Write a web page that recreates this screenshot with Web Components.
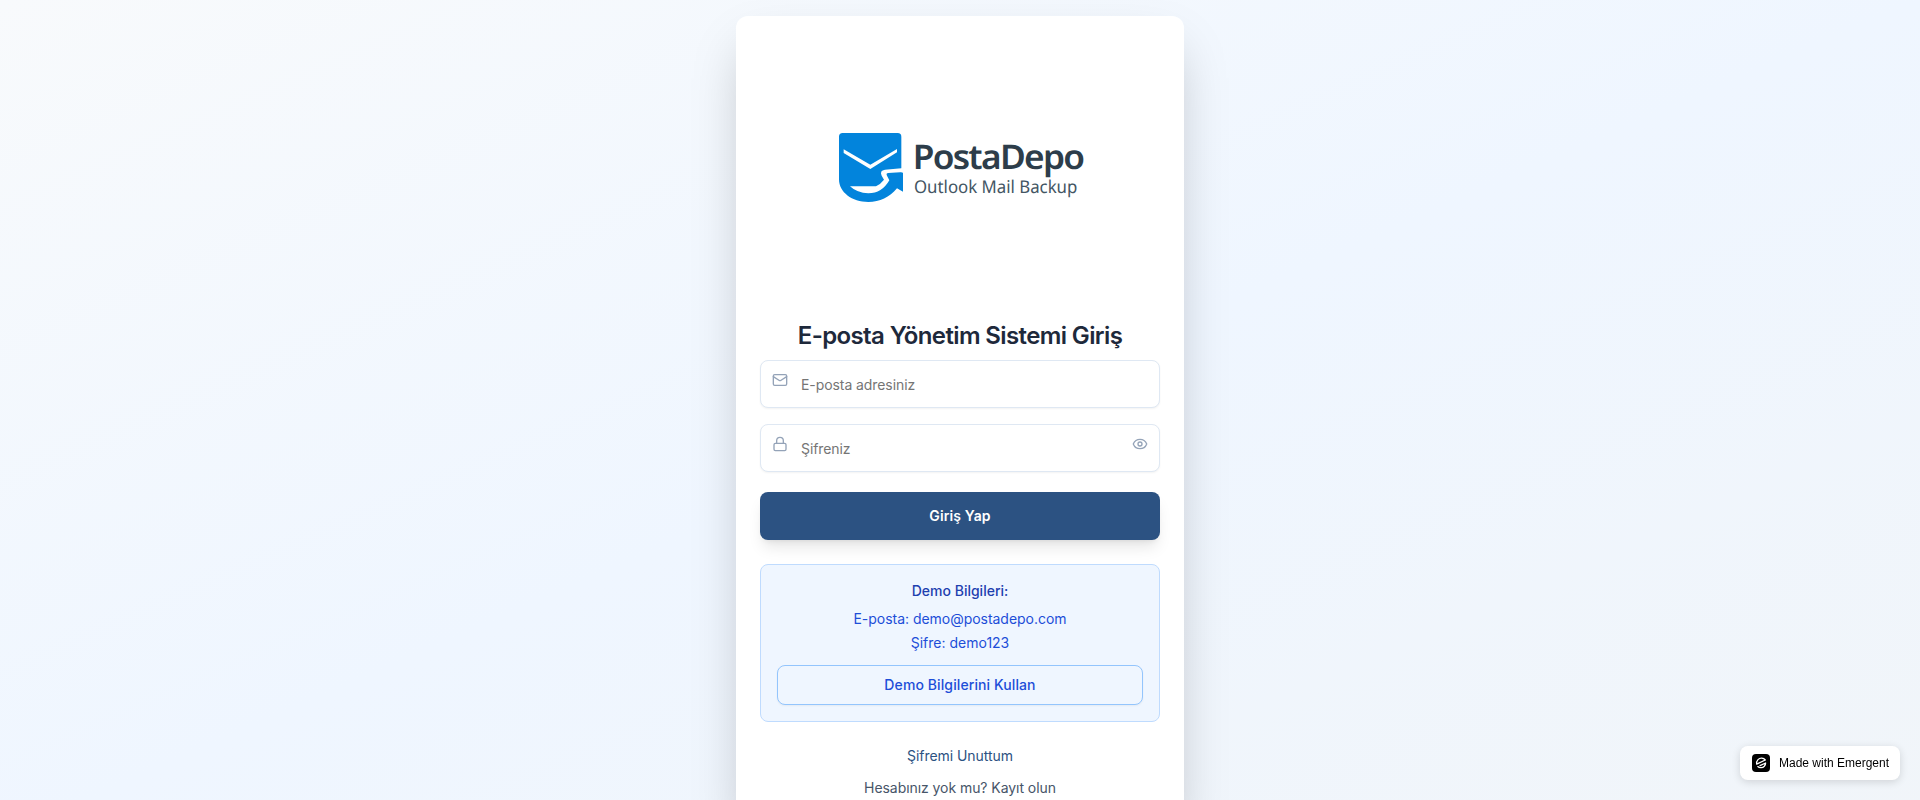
<!DOCTYPE html>
<html lang="tr">
<head>
<meta charset="utf-8">
<title>PostaDepo</title>
<style>
html,body{margin:0;height:100%;overflow:hidden;font-family:Inter,"Noto Sans",sans-serif}
</style>
</head>
<body>
<login-page></login-page>
<script>
const define = (name, html) => customElements.define(name, class extends HTMLElement {
  constructor() {
    super();
    const t = document.createElement('template');
    t.innerHTML = '<style>*{box-sizing:border-box}:host{display:block;box-sizing:border-box}</style>' + html(this);
    this.attachShadow({ mode: 'open' }).append(t.content.cloneNode(true));
  }
});

const icons = {
  mail: '<rect width="20" height="16" x="2" y="4" rx="2"/><path d="m22 7-8.97 5.7a1.94 1.94 0 0 1-2.06 0L2 7"/>',
  lock: '<rect width="18" height="11" x="3" y="11" rx="2" ry="2"/><path d="M7 11V7a5 5 0 0 1 10 0v4"/>',
  eye: '<path d="M2.062 12.348a1 1 0 0 1 0-.696 10.75 10.75 0 0 1 19.876 0 1 1 0 0 1 0 .696 10.75 10.75 0 0 1-19.876 0"/><circle cx="12" cy="12" r="3"/>'
};
define('line-icon', el => `<style>:host{width:16px;height:16px;color:#94a3b8}svg{display:block}</style>
<svg width="16" height="16" viewBox="0 0 24 24" fill="none" stroke="currentColor" stroke-width="2" stroke-linecap="round" stroke-linejoin="round">${icons[el.getAttribute('name')]}</svg>`);

define('brand-logo', () => `<style>
:host{height:279px;padding-top:70px;display:flex;justify-content:center;align-items:flex-start}
text{font-family:"Noto Sans","Open Sans",sans-serif;text-rendering:geometricPrecision}
.name{font-weight:600;letter-spacing:-5px}
</style>
<svg width="280" height="110" viewBox="0 0 840 330">
<path fill="#0284dc" d="M57 80Q57 69 68 69H233Q244 69 244 80V187L249 188V245L231 235C208 262 180 276 145 276C96 276 57 247 57 208Z"/>
<path fill="#fefefe" d="M71 118L151 164L231 117V127L151 177L71 129Z"/>
<path fill="#fefefe" d="M90 229H168Q182 222 192 209L185 197Q178 181 195 179L252 174V186L205 189Q197 190 201 197L208 211Q186 250 145 250Q111 249 90 229Z"/>
<text class="name" x="278" y="178" font-size="102" fill="#2d3d4a" textLength="512" lengthAdjust="spacingAndGlyphs">PostaDepo</text>
<text x="282" y="249" font-size="53" fill="#435563" textLength="490" lengthAdjust="spacingAndGlyphs">Outlook Mail Backup</text>
</svg>`);

define('text-field', el => `<style>
:host{height:48px;position:relative}
input{width:100%;height:48px;margin:0;padding:0 40px;border:1px solid #dfe8f3;border-radius:8px;background:#fff;font:14px Inter,sans-serif;letter-spacing:-.08px;color:#1e293b;outline:none;box-shadow:0 1px 2px rgba(0,0,0,.05)}
input::placeholder{color:#757575;opacity:1}
.lead{position:absolute;left:12px;top:12px}
::slotted(*){position:absolute;right:12px;top:12px}
</style>
<input placeholder="${el.getAttribute('placeholder')}"><line-icon class="lead" name="${el.getAttribute('icon')}"></line-icon><slot></slot>`);

define('action-button', () => `<style>
button{display:block;width:100%;height:48px;border:0;border-radius:8px;background:#2c5282;color:#fff;font:600 14px/20px Inter,sans-serif;letter-spacing:.01em;box-shadow:0 10px 15px -3px rgba(0,0,0,.1),0 4px 6px -4px rgba(0,0,0,.1)}
:host([variant=outline]) button{height:40px;background:#eff6ff;border:1px solid #93c5fd;color:#1d4ed8;font-weight:500;letter-spacing:.1px;box-shadow:0 1px 2px rgba(0,0,0,.05)}
</style><button><slot></slot></button>`);

define('demo-info', () => `<style>
:host{padding:16px;border:1px solid #bfdbfe;border-radius:8px;background:#eff6ff;text-align:center;font-size:14px;line-height:20px;color:#1d4ed8}
p{margin:0}.t{font-weight:500;color:#1e40af;margin-bottom:8px}.r{margin-bottom:4px;letter-spacing:-.03px}
action-button{margin-top:12px}
</style>
<p class="t">Demo Bilgileri:</p><p class="r">E-posta: demo@postadepo.com</p><p>Şifre: demo123</p>
<action-button variant="outline">Demo Bilgilerini Kullan</action-button>`);

define('login-card', () => `<style>
:host{width:448px;padding:24px;border-radius:12px;background:rgba(255,255,255,.95);box-shadow:0 25px 50px -12px rgba(0,0,0,.25)}
h1{margin:0 0 8px;padding-top:1px;font-size:24px;line-height:32px;font-weight:600;letter-spacing:-.62px;color:#1e293b;text-align:center}
form{display:grid;gap:16px}
form action-button{margin-top:4px}
demo-info{margin-top:24px}
.links{display:grid;gap:12px;margin-top:24px;text-align:center;font-size:14px;line-height:20px;letter-spacing:-.06px;color:#475569}
.links a{color:#2c5282}
</style>
<brand-logo></brand-logo>
<h1>E-posta Yönetim Sistemi Giriş</h1>
<form><text-field icon="mail" placeholder="E-posta adresiniz"></text-field>
<text-field icon="lock" placeholder="Şifreniz"><line-icon name="eye"></line-icon></text-field>
<action-button>Giriş Yap</action-button></form>
<demo-info></demo-info>
<div class="links"><a>Şifremi Unuttum</a><span>Hesabınız yok mu? Kayıt olun</span></div>`);

define('made-badge', () => `<style>
:host{position:fixed;right:20px;bottom:20px;width:160px;height:34px;padding-left:12px;display:flex;align-items:center;gap:9px;border-radius:8px;background:#fff;box-shadow:0 2px 8px rgba(0,0,0,.14);font:12px "Liberation Sans",Arial,sans-serif;color:#000;white-space:nowrap}
svg{display:block;flex:none}
</style>
<svg width="18" height="18" viewBox="0 0 18 18"><rect width="18" height="18" rx="4" fill="#000"/><g fill="none" stroke="#fff" stroke-width="1.3" stroke-linecap="round" stroke-linejoin="round"><path d="M13.300 6C11.500 3.700 8 3.600 6 5.600C4.700 7 4.300 8.600 4.700 10.200L13.300 6"/><path d="M5.800 12.600C7.600 14.200 10.600 14 12.300 12.200C13.200 11.200 13.600 10.100 13.600 9L8 11.600"/></g></svg><span>Made with Emergent</span>`);

define('login-page', () => `<style>
:host{height:100%;overflow:hidden}
.bg{min-height:100%;padding:16px;display:flex;justify-content:center;background:linear-gradient(to bottom right,#f8fafc,#eff6ff,#f1f5f9)}
</style>
<div class="bg"><login-card></login-card></div><made-badge></made-badge>`);
</script>
</body>
</html>
